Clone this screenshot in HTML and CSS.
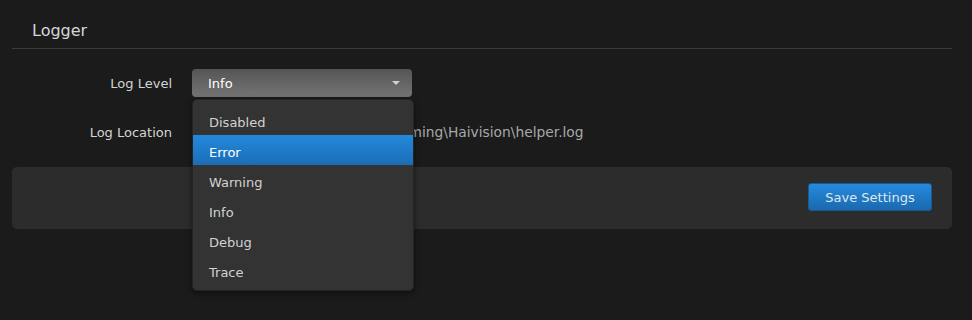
FILE: index.html
```html
<!DOCTYPE html>
<html>
<head>
<meta charset="utf-8">
<link rel="stylesheet" href="styles.css">
</head>
<body>
<div class="section">
  <h2 class="title">Logger</h2>
  <div class="form">
    <div class="row">
      <label class="label">Log Level</label>
      <div class="field">
        <div class="select">
          <span>Info</span>
          <span class="caret"></span>
        </div>
        <ul class="menu">
          <li>Disabled</li>
          <li class="active">Error</li>
          <li>Warning</li>
          <li>Info</li>
          <li>Debug</li>
          <li>Trace</li>
        </ul>
      </div>
    </div>
    <div class="row">
      <label class="label">Log Location</label>
      <div class="value">C:\Users\admin\AppData\Roaming\Haivision\helper.log</div>
    </div>
  </div>
  <div class="footer">
    <button class="btn">Save Settings</button>
  </div>
</div>
</body>
</html>
```
FILE: styles.css
```css
* { box-sizing: border-box; }
html, body { margin: 0; padding: 0; }
body {
  background: #1b1b1b;
  font-family: "DejaVu Sans", sans-serif;
  font-size: 13px;
  color: #cfcfcf;
  width: 972px;
  height: 320px;
  overflow: hidden;
}
.section { padding: 0 20px 0 12px; }
.title {
  margin: 0;
  font-weight: normal;
  font-size: 16px;
  line-height: 20px;
  color: #d6d6d6;
  padding: 21px 20px 7px;
  border-bottom: 1px solid #3a3a3a;
}
.form { padding-top: 20px; display: flex; flex-direction: column; gap: 21px; }
.row { display: flex; align-items: center; height: 28px; gap: 20px; }
.label { width: 160px; text-align: right; color: #d4d4d4; }
.field { position: relative; width: 220px; height: 28px; }
.select {
  height: 28px;
  border-radius: 4px;
  background: linear-gradient(#555555, #747474);
  color: #ffffff;
  display: flex;
  align-items: center;
  justify-content: space-between;
  padding: 0 12px 0 16px;
}
.caret {
  width: 0; height: 0;
  border-left: 4px solid transparent;
  border-right: 4px solid transparent;
  border-top: 4px solid #d0d0d0;
}
.menu {
  position: absolute;
  top: 30px;
  left: 0;
  width: 222px;
  margin: 0;
  padding: 5px 0;
  list-style: none;
  background: #333333;
  border: 1px solid #242424;
  border-radius: 5px;
  box-shadow: 0 2px 6px rgba(0,0,0,0.5);
  z-index: 2;
}
.menu li {
  height: 30px;
  line-height: 25px;
  padding: 5px 0 0 16px;
  color: #d2d2d2;
}
.menu li.active {
  background: linear-gradient(#2389dc, #1b6db5);
  color: #ffffff;
}
.value { color: #a8a8a8; padding-left: 16px; font-size: 13.8px; }
.footer {
  margin-top: 21px;
  background: #2c2c2c;
  border-radius: 5px;
  height: 62px;
  display: flex;
  align-items: center;
  justify-content: flex-end;
  padding: 0 20px 2px;
}
.btn {
  width: 124px;
  height: 28px;
  border: 1px solid #175a98;
  border-radius: 3px;
  background: linear-gradient(#258bdd, #1a69ae);
  color: #dfe6ee;
  font-family: inherit;
  font-size: 13px;
  padding: 0;
}
```
